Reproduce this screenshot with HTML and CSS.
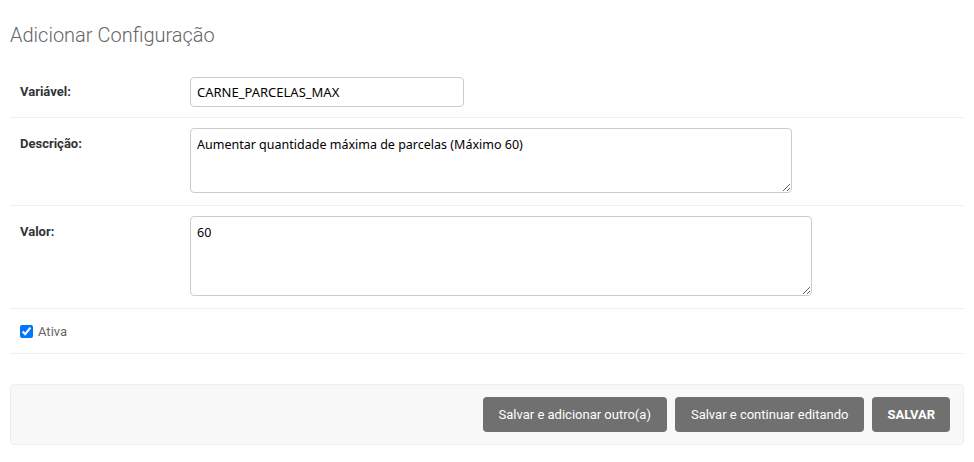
FILE: index.html
```html
<!DOCTYPE html>
<html>
<head>
  <meta charset="utf-8">
  <meta name="viewport" content="width=device-width">
  <title>Adicionar Configuração</title>
  <link rel="stylesheet" href="styles.css">
</head>
<body>
  <div id="content">
    <h1>Adicionar Configuração</h1>
    <form>
      <fieldset class="module">
        <div class="form-row">
          <label class="required" for="id_variavel">Variável:</label>
          <input type="text" id="id_variavel" class="vTextField" value="CARNE_PARCELAS_MAX">
        </div>
        <div class="form-row">
          <label class="required" for="id_descricao">Descrição:</label>
          <textarea id="id_descricao" class="desc-field">Aumentar quantidade máxima de parcelas (Máximo 60)</textarea>
        </div>
        <div class="form-row">
          <label class="required" for="id_valor">Valor:</label>
          <textarea id="id_valor" class="valor-field">60</textarea>
        </div>
        <div class="form-row checkbox-row">
          <input type="checkbox" id="id_ativa" checked>
          <label class="vCheckboxLabel" for="id_ativa">Ativa</label>
        </div>
      </fieldset>
      <div class="submit-row">
        <input type="button" value="Salvar e adicionar outro(a)">
        <input type="button" value="Salvar e continuar editando">
        <input type="button" class="default" value="SALVAR">
      </div>
    </form>
  </div>
</body>
</html>
```

FILE: styles.css
```css
body {
  font-family: Roboto, "Liberation Sans", sans-serif;
  font-size: 13px;
  color: #333;
  margin: 0;
  padding: 0;
  background: #fff;
}
#content {
  padding: 23px 10px 10px 10px;
}
h1 {
  font-size: 20px;
  font-weight: 300;
  line-height: 24px;
  color: #666;
  margin: 0 0 20px 0;
}
fieldset {
  border: none;
  margin: 0;
  padding: 0;
}
.form-row {
  display: flex;
  align-items: flex-start;
  padding: 10px;
  border-bottom: 1px solid #eee;
}
.form-row label {
  width: 160px;
  padding: 6px 10px 0 0;
  line-height: 18px;
  font-weight: bold;
  color: #333;
}
.form-row label[for="id_valor"],
.form-row label[for="id_descricao"] {
  padding-top: 7px;
}
.vTextField,
textarea {
  font-family: "Noto Sans", "Open Sans", sans-serif;
  font-size: 12.5px;
  color: #000;
  border: 1px solid #ccc;
  border-radius: 4px;
  box-sizing: border-box;
  margin: 0;
}
.vTextField {
  width: 274px;
  height: 30px;
  padding: 0 6px;
  font-size: 13px;
}
textarea {
  padding: 7px 6px 5px 6px;
  line-height: 17px;
  margin-bottom: 2px;
}
.desc-field {
  width: 602px;
  height: 65px;
}
.valor-field {
  width: 622px;
  height: 80px;
}
.checkbox-row {
  align-items: center;
  height: 24px;
}
.checkbox-row input {
  width: 13px;
  height: 13px;
  margin: 0 5px 0 0;
  accent-color: #0075ff;
}
.checkbox-row label.vCheckboxLabel {
  width: auto;
  padding: 0;
  font-weight: normal;
  color: #666;
  line-height: 15px;
}
.submit-row {
  display: flex;
  justify-content: flex-end;
  gap: 8px;
  margin-top: 30px;
  padding: 12px 13px 12px 14px;
  background: #f8f8f8;
  border: 1px solid #eee;
  border-radius: 4px;
}
.submit-row input {
  font-family: Roboto, "Liberation Sans", sans-serif;
  font-size: 13px;
  height: 35px;
  padding: 0 16px;
  border: none;
  border-radius: 4px;
  background: #707070;
  color: #fff;
  cursor: pointer;
}
.submit-row input.default {
  font-weight: bold;
  padding: 0 15px;
}
```
